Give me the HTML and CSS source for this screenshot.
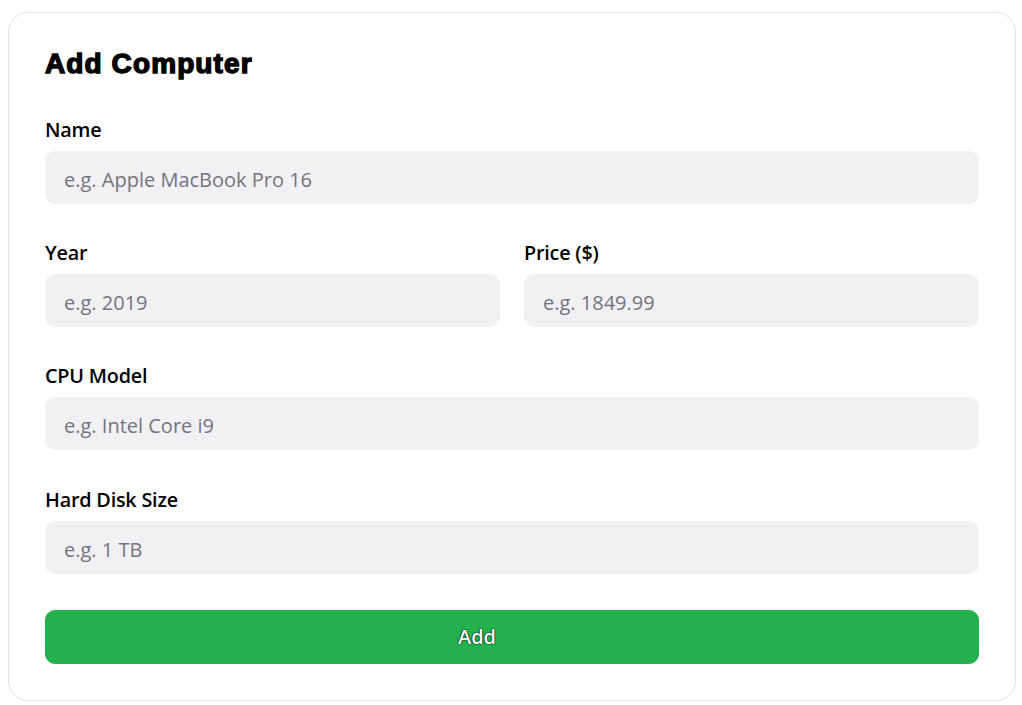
FILE: index.html
```html
<!DOCTYPE html>
<html lang="en">
<head>
<meta charset="utf-8">
<title>Add Computer</title>
<link rel="stylesheet" href="styles.css">
</head>
<body>
<form class="card">
  <h1 class="title">Add Computer</h1>
  <div class="field">
    <label class="label" for="name">Name</label>
    <input class="input" id="name" type="text" placeholder="e.g. Apple MacBook Pro 16">
  </div>
  <div class="row">
    <div class="field">
      <label class="label" for="year">Year</label>
      <input class="input" id="year" type="text" placeholder="e.g. 2019">
    </div>
    <div class="field">
      <label class="label" for="price">Price ($)</label>
      <input class="input" id="price" type="text" placeholder="e.g. 1849.99">
    </div>
  </div>
  <div class="field">
    <label class="label" for="cpu">CPU Model</label>
    <input class="input" id="cpu" type="text" placeholder="e.g. Intel Core i9">
  </div>
  <div class="field">
    <label class="label" for="disk">Hard Disk Size</label>
    <input class="input" id="disk" type="text" placeholder="e.g. 1 TB">
  </div>
  <button class="button" type="button">Add</button>
</form>
</body>
</html>
```
FILE: styles.css
```css
* { box-sizing: border-box; }
html, body { margin: 0; padding: 0; background: #fff; }
body {
  padding: 12px 6px 0 8px;
  font-family: "Open Sans", "Noto Sans", sans-serif;
  color: #000;
}
.card {
  width: 1008px;
  height: 689px;
  border: 1px solid #e2e2e2;
  border-radius: 20px;
  padding: 36px;
  display: flex;
  flex-direction: column;
  gap: 37px;
}
.title {
  margin: 0 0 2px 0;
  font-family: "Liberation Sans", Arial, sans-serif;
  font-weight: 700;
  font-size: 28px;
  line-height: 30px;
  letter-spacing: 1.1px;
  -webkit-text-stroke: 1.4px #000;
}
.field {
  display: flex;
  flex-direction: column;
  gap: 9px;
  flex: 1;
}
.row {
  display: flex;
  gap: 24px;
}
.label {
  font-size: 19.8px;
  font-weight: 600;
  line-height: 24px;
  letter-spacing: -0.2px;
}
.input {
  height: 53px;
  border: none;
  border-radius: 10px;
  background: #f1f1f3;
  padding: 4px 19px 0 19px;
  font-family: "Open Sans", "Noto Sans", sans-serif;
  font-size: 20px;
  color: #222;
  outline: none;
  width: 100%;
}
.input::placeholder { color: #747480; }
.button {
  height: 54px;
  margin-top: -1px;
  border: 1px solid #22b14c;
  border-radius: 10px;
  background: #22b14c;
  color: #fff;
  padding: 0 70px 0 0;
  font-family: "Open Sans", "Noto Sans", sans-serif;
  font-size: 20px;
  font-weight: 600;
  text-shadow: 0 0 1px #000, 0 0 1px #000, 0 0 1px #000;
  cursor: pointer;
}
```
